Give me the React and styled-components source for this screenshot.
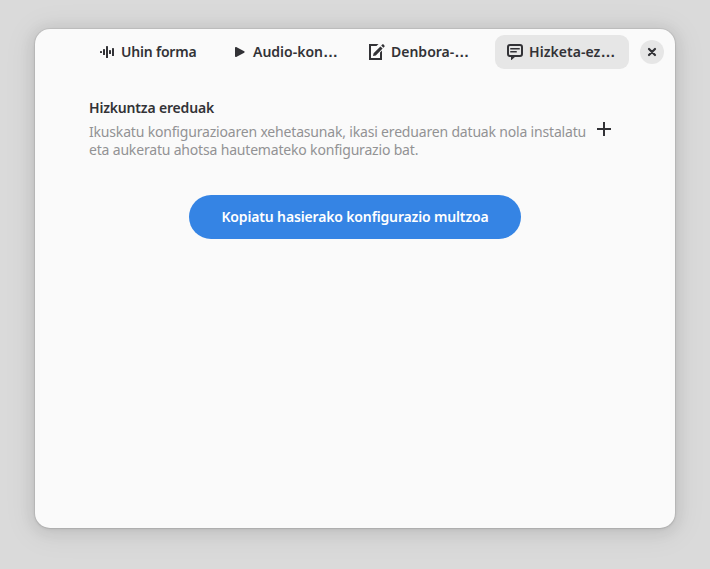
import React from "react";
import styled, { createGlobalStyle } from "styled-components";

const GlobalStyle = createGlobalStyle`
  * { box-sizing: border-box; }
  body {
    margin: 0;
    background: #dadada;
    color: #323236;
    font-family: "Noto Sans", sans-serif;
    overflow: hidden;
  }
`;

const Desktop = styled.div`
  width: 710px;
  height: 569px;
  padding: 29px 35px 41px;
`;

const Window = styled.main`
  height: 499px;
  border-radius: 15px;
  background: #fafafa;
  box-shadow: 0 0 0 1px rgba(0, 0, 0, 0.05), 0 1px 3px rgba(0, 0, 0, 0.1),
    0 2px 14px 3px rgba(0, 0, 0, 0.08), 0 3px 28px 8px rgba(0, 0, 0, 0.05);
`;

const HeaderBar = styled.header`
  display: flex;
  align-items: center;
  height: 46px;
  padding: 0 11px 0 46px;
`;

const Tabs = styled.nav`
  display: flex;
  gap: 4px;
`;

const Tab = styled.button`
  display: flex;
  align-items: center;
  gap: 6px;
  width: 134px;
  height: 34px;
  padding: 0 0 0 ${(p) => p.$inset || 12}px;
  border: 0;
  border-radius: 9px;
  background: ${(p) => (p.$active ? "#e6e6e6" : "transparent")};
  color: inherit;
`;

const Label = styled.span`
  font: 600 14px/20px "Noto Sans", sans-serif;
  letter-spacing: ${(p) => p.$spacing ?? -0.2}px;
  white-space: nowrap;
`;

const Ellipsis = styled.span`
  font-family: "Liberation Sans", sans-serif;
  font-size: 15px;
  line-height: 1;
  font-weight: 700;
`;

const Icon = styled.svg`
  flex: none;
  display: block;
  width: 16px;
  height: 16px;
`;

const CloseButton = styled.button`
  display: grid;
  place-items: center;
  width: 24px;
  height: 24px;
  margin-left: 11px;
  padding: 0;
  border: 0;
  border-radius: 50%;
  background: #e6e6e6;
  color: inherit;
`;

const Content = styled.section`
  display: flex;
  flex-direction: column;
  padding: 22px 54px 0;
`;

const GroupHeader = styled.div`
  display: flex;
  align-items: center;
  height: 62px;
`;

const GroupText = styled.div`
  width: 507px;
`;

const Title = styled.h1`
  margin: 0 0 5px;
  font: 600 14px/20px "Noto Sans", sans-serif;
  letter-spacing: -0.18px;
`;

const Line = styled.span`
  display: block;
  color: #929294;
  font: 400 14px/18px "Noto Sans", sans-serif;
  letter-spacing: -0.18px;
  white-space: nowrap;
`;

const AddButton = styled.button`
  margin-top: 2px;
  padding: 0;
  border: 0;
  background: none;
  color: inherit;
`;

const PillButton = styled.button`
  align-self: center;
  width: 332px;
  height: 44px;
  margin-top: 36px;
  padding: 0;
  border: 0;
  border-radius: 22px;
  background: #3584e4;
  color: #fff;
`;

const WaveIcon = () => (
  <Icon viewBox="0 0 16 16" fill="currentColor">
    <rect x="1" y="7" width="2" height="2" rx=".6" />
    <rect x="4" y="5" width="2" height="6" rx=".6" />
    <rect x="7" y="2" width="2" height="12" rx=".6" />
    <rect x="10" y="6" width="2" height="4" rx=".6" />
    <rect x="13" y="4" width="2" height="8" rx=".6" />
  </Icon>
);

const PlayIcon = () => (
  <Icon viewBox="0 0 16 16" fill="currentColor">
    <path d="M4 3.8c0-.7.6-1 1.2-.7l8 4.2c.6.4.6 1 0 1.4l-8 4.2c-.6.3-1.2 0-1.2-.7z" />
  </Icon>
);

const EditIcon = () => (
  <Icon viewBox="0 0 16 16" fill="currentColor">
    <path d="M0 0h9.5L7.5 2H2v12h9V8.5l2-2V16H0z" />
    <path d="M4 12l.6-2.8 6.8-6.8 2.2 2.2-6.8 6.8zM12.2 1.6l1-1c.4-.4 1-.4 1.4 0l.8.8c.4.4.4 1 0 1.4l-1 1z" />
  </Icon>
);

const ChatIcon = () => (
  <Icon viewBox="0 0 16 16" fill="none" stroke="currentColor">
    <path d="M3 1h10a2 2 0 0 1 2 2v7a2 2 0 0 1-2 2H3a2 2 0 0 1-2-2V3a2 2 0 0 1 2-2z" strokeWidth="2" />
    <path d="M4 12h5l-4.5 4H4z" fill="currentColor" stroke="none" />
    <path d="M4 4.75h8M4 7.75h5" strokeWidth="1.5" strokeLinecap="square" />
  </Icon>
);

const CloseIcon = () => (
  <Icon viewBox="0 0 16 16" fill="none" stroke="currentColor" strokeWidth="2.2">
    <path d="M5 5l6 6M11 5l-6 6" strokeLinecap="round" />
  </Icon>
);

const PlusIcon = () => (
  <Icon viewBox="0 0 16 16" fill="currentColor">
    <path d="M7 1h2v6h6v2H9v6H7V9H1V7h6z" />
  </Icon>
);

const tabs = [
  { label: "Uhin forma", Glyph: WaveIcon, inset: 18 },
  { label: "Audio-kon", Glyph: PlayIcon, truncated: true, spacing: 0 },
  { label: "Denbora-", Glyph: EditIcon, truncated: true, spacing: 0 },
  { label: "Hizketa-ez", Glyph: ChatIcon, truncated: true, active: true, spacing: 0.05 },
];

export default function App() {
  return (
    <Desktop>
      <GlobalStyle />
      <Window>
        <HeaderBar>
          <Tabs>
            {tabs.map(({ label, Glyph, active, inset, truncated, spacing }) => (
              <Tab key={label} $active={active} $inset={inset}>
                <Glyph />
                <Label $spacing={spacing}>
                  {label}
                  {truncated && <Ellipsis>…</Ellipsis>}
                </Label>
              </Tab>
            ))}
          </Tabs>
          <CloseButton aria-label="Itxi">
            <CloseIcon />
          </CloseButton>
        </HeaderBar>
        <Content>
          <GroupHeader>
            <GroupText>
              <Title>Hizkuntza ereduak</Title>
              <Line>Ikuskatu konfigurazioaren xehetasunak, ikasi ereduaren datuak nola instalatu</Line>
              <Line>eta aukeratu ahotsa hautemateko konfigurazio bat.</Line>
            </GroupText>
            <AddButton aria-label="Gehitu">
              <PlusIcon />
            </AddButton>
          </GroupHeader>
          <PillButton>
            <Label $spacing={-0.15}>Kopiatu hasierako konfigurazio multzoa</Label>
          </PillButton>
        </Content>
      </Window>
    </Desktop>
  );
}
